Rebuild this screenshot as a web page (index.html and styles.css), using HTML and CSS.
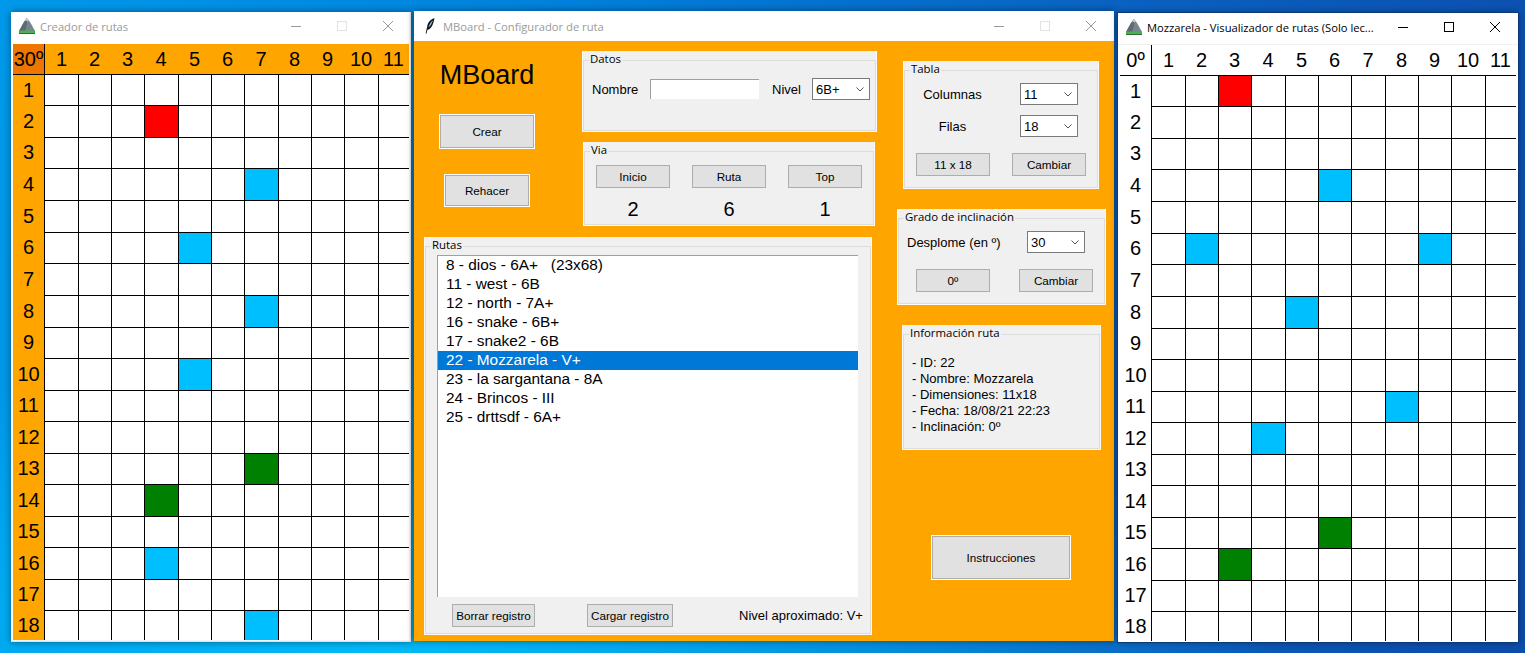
FILE: index.html
```html
<!DOCTYPE html>
<html lang="es">
<head>
    <meta charset="UTF-8">
    <meta name="viewport" content="width=device-width, initial-scale=1.0">
    <title>MBoard</title>
    <link rel="stylesheet" href="styles.css">
</head>
<body>
    <svg class="icon-defs" width="0" height="0">
        <symbol id="mountain" viewBox="0 0 16 16">
            <polygon points="8,0 11,4 16,13 16,16 0,16 0,13 5,4" fill="#77868d"/>
            <polygon points="8,0 5,4 0,13 0,14 6,14 8,6" fill="#5d6b73"/>
            <polygon points="8,0 9.6,2.2 8.4,3.6 7.4,2.6 6.4,3.4 6.6,2" fill="#c9d0d4"/>
            <rect x="0" y="12.5" width="16" height="2.5" fill="#4caf50"/>
            <rect x="0" y="15" width="16" height="1" fill="#2f6b3a"/>
        </symbol>
    </svg>

    <!-- creador -->
    <div class="window win-creator inactive">
        <div class="titlebar">
            <svg class="app-icon"><use href="#mountain"/></svg>
            <span class="title-text">Creador de rutas</span>
            <div class="controls">
                <span class="ctl"><i class="ctl-min"></i></span>
                <span class="ctl"><i class="ctl-max"></i></span>
                <span class="ctl"><svg class="ctl-close" viewBox="0 0 10 10"><path d="M0 0L10 10M10 0L0 10"/></svg></span>
            </div>
        </div>
        <div class="board orange" id="boardCreator"></div>
    </div>

    <!-- configurador -->
    <div class="window win-config inactive">
        <div class="titlebar">
            <svg class="feather" viewBox="0 0 10 16">
                <path d="M9.5 0.3C6 1 3 4 2.2 8.4L1.6 11.2L0.6 15.6L1.4 15.8L2.4 12C5.6 11.4 8 8 9.5 0.3Z" fill="#10161c"/>
                <path d="M8 2.2C6 3.6 4.4 6 3.4 9.4C5 8.4 6.8 6 8 2.2Z" fill="#8fb4d6"/>
            </svg>
            <span class="title-text">MBoard - Configurador de ruta</span>
            <div class="controls">
                <span class="ctl"><i class="ctl-min"></i></span>
                <span class="ctl"><i class="ctl-max"></i></span>
                <span class="ctl"><svg class="ctl-close" viewBox="0 0 10 10"><path d="M0 0L10 10M10 0L0 10"/></svg></span>
            </div>
        </div>
        <div class="config">
            <div class="col-main">
                <div class="top-row">
                    <div class="brand-col">
                        <h1 class="brand">MBoard</h1>
                        <button class="btn btn-big btn-crear">Crear</button>
                        <button class="btn btn-big btn-rehacer">Rehacer</button>
                    </div>
                    <div class="stack-col">
                        <div class="panel panel-datos">
                            <fieldset>
                                <legend>Datos</legend>
                                <div class="datos-row">
                                    <span class="lbl lbl-nombre">Nombre</span>
                                    <input class="entry" type="text">
                                    <span class="lbl lbl-nivel">Nivel</span>
                                    <div class="combo">6B+<svg viewBox="0 0 8 5"><path d="M0.5 0.5L4 4L7.5 0.5"/></svg></div>
                                </div>
                            </fieldset>
                        </div>
                        <div class="panel panel-via">
                            <fieldset>
                                <legend>Via</legend>
                                <div class="via-grid">
                                    <button class="btn">Inicio</button>
                                    <button class="btn">Ruta</button>
                                    <button class="btn">Top</button>
                                    <span class="count">2</span>
                                    <span class="count">6</span>
                                    <span class="count">1</span>
                                </div>
                            </fieldset>
                        </div>
                    </div>
                </div>
                <div class="panel panel-rutas">
                    <fieldset>
                        <legend>Rutas</legend>
                        <ul class="listbox">
                            <li>8 - dios - 6A+ &nbsp; (23x68)</li>
                            <li>11 - west - 6B</li>
                            <li>12 - north - 7A+</li>
                            <li>16 - snake - 6B+</li>
                            <li>17 - snake2 - 6B</li>
                            <li class="selected">22 - Mozzarela - V+</li>
                            <li>23 - la sargantana - 8A</li>
                            <li>24 - Brincos - III</li>
                            <li>25 - drttsdf - 6A+</li>
                        </ul>
                        <div class="rutas-foot">
                            <button class="btn btn-borrar">Borrar registro</button>
                            <button class="btn btn-cargar">Cargar registro</button>
                            <span class="lbl aprox">Nivel aproximado: V+</span>
                        </div>
                    </fieldset>
                </div>
            </div>
            <div class="col-side">
                <div class="panel panel-tabla">
                    <fieldset>
                        <legend>Tabla</legend>
                        <div class="tabla-grid">
                            <span class="lbl">Columnas</span>
                            <div class="combo">11<svg viewBox="0 0 8 5"><path d="M0.5 0.5L4 4L7.5 0.5"/></svg></div>
                            <span class="lbl">Filas</span>
                            <div class="combo">18<svg viewBox="0 0 8 5"><path d="M0.5 0.5L4 4L7.5 0.5"/></svg></div>
                        </div>
                        <div class="btn-row tabla-btns">
                            <button class="btn">11 x 18</button>
                            <button class="btn">Cambiar</button>
                        </div>
                    </fieldset>
                </div>
                <div class="panel panel-grado">
                    <fieldset>
                        <legend>Grado de inclinación</legend>
                        <div class="grado-row">
                            <span class="lbl">Desplome (en º)</span>
                            <div class="combo">30<svg viewBox="0 0 8 5"><path d="M0.5 0.5L4 4L7.5 0.5"/></svg></div>
                        </div>
                        <div class="btn-row grado-btns">
                            <button class="btn">0º</button>
                            <button class="btn">Cambiar</button>
                        </div>
                    </fieldset>
                </div>
                <div class="panel panel-info">
                    <fieldset>
                        <legend>Información ruta</legend>
                        <div class="info-text">
                            <div>- ID: 22</div>
                            <div>- Nombre: Mozzarela</div>
                            <div>- Dimensiones: 11x18</div>
                            <div>- Fecha: 18/08/21 22:23</div>
                            <div>- Inclinación: 0º</div>
                        </div>
                    </fieldset>
                </div>
                <button class="btn btn-big btn-instr">Instrucciones</button>
            </div>
        </div>
    </div>

    <!-- visualizador -->
    <div class="window win-viewer">
        <div class="titlebar">
            <svg class="app-icon"><use href="#mountain"/></svg>
            <span class="title-text">Mozzarela - Visualizador de rutas (Solo lec...</span>
            <div class="controls">
                <span class="ctl"><i class="ctl-min"></i></span>
                <span class="ctl"><i class="ctl-max"></i></span>
                <span class="ctl"><svg class="ctl-close" viewBox="0 0 10 10"><path d="M0 0L10 10M10 0L0 10"/></svg></span>
            </div>
        </div>
        <div class="board" id="boardViewer"></div>
    </div>

    <script src="script.js"></script>
</body>
</html>
```

FILE: styles.css
```css
* {
    box-sizing: border-box;
}
html, body {
    margin: 0;
    height: 100%;
}
body {
    position: relative;
    overflow: hidden;
    width: 1525px;
    height: 653px;
    font-family: "Liberation Sans", Arial, sans-serif;
    background:
        radial-gradient(ellipse 900px 300px at 25% 100%, #00baf8 0%, rgba(0, 186, 248, 0) 100%),
        linear-gradient(100deg, #0099ea 0%, #0080dc 35%, #0a60c0 70%, #0c4cab 100%);
}
.icon-defs {
    position: absolute;
}

/* ventanas */
.window {
    position: absolute;
    background: white;
    box-shadow: 0 0 7px rgba(0, 0, 0, 0.45);
}
.win-creator {
    left: 11px;
    top: 12px;
    width: 400px;
    height: 630px;
    padding: 0 2px;
    box-shadow: 0 0 7px rgba(0, 0, 0, 0.45), inset -1px -1px 2px #d8d8d8;
}
.win-config {
    left: 414px;
    top: 11px;
    width: 700px;
    height: 630px;
}
.win-viewer {
    left: 1118px;
    top: 13px;
    width: 400px;
    height: 629px;
    padding: 0 2px;
    outline: 1px solid #0d3a78;
}
.titlebar {
    display: flex;
    align-items: center;
    height: 32px;
    font-family: "Open Sans", sans-serif;
    font-size: 11.2px;
    color: black;
}
.win-creator .titlebar,
.win-viewer .titlebar {
    margin: 0 -2px;
    padding: 0 0 4px 8px;
}
.win-viewer .titlebar {
    padding-bottom: 3px;
    border-bottom: 1px solid #f0f0f0;
}
.win-config .titlebar {
    height: 30px;
    padding-left: 11px;
}
.inactive .title-text {
    color: #9a9a9a;
}
.app-icon {
    width: 16px;
    height: 16px;
    margin-right: 5px;
}
.feather {
    width: 10px;
    height: 16px;
    margin-right: 8px;
}
.controls {
    display: flex;
    margin-left: auto;
}
.ctl {
    display: flex;
    align-items: center;
    justify-content: center;
    width: 46px;
    height: 28px;
}
.ctl-min {
    width: 10px;
    height: 1px;
    background: black;
}
.ctl-max {
    width: 10px;
    height: 10px;
    border: 1px solid black;
}
.ctl-close {
    width: 10px;
    height: 10px;
}
.ctl-close path {
    stroke: black;
    stroke-width: 1;
    fill: none;
}
.inactive .ctl-min {
    background: #999;
}
.inactive .ctl-max {
    border-color: #e2e2e2;
}
.inactive .ctl-close path {
    stroke: #999;
}

/* tablero */
.board {
    display: grid;
    grid-template-columns: 31px 34px 33px 33px 34px 33px 33px 34px 33px 33px 34px 31px;
    grid-template-rows: 30px 31px 32px 31px 32px 32px 31px 32px 32px 31px 32px 31px 32px 31px 32px 31px 32px 31px 30px;
    font-size: 20px;
    color: black;
}
.board .label {
    display: flex;
    align-items: center;
    justify-content: center;
}
.board.orange .label {
    background: #ffa500;
}
.board.orange .corner {
    background: #ee7600;
}
.board .col-first {
    border-left: 1px solid black;
}
.board .row-first {
    border-top: 1px solid black;
}
.cell {
    border-left: 1px solid black;
    border-top: 1px solid black;
    background: white;
}
.cell.red {
    background: #ff0000;
}
.cell.blue {
    background: #00bfff;
}
.cell.green {
    background: #008000;
}

/* configurador */
.config {
    display: flex;
    height: 600px;
    background: #ffa500;
    font-size: 13px;
    color: black;
}
.col-main {
    width: 483px;
}
.col-side {
    display: flex;
    flex-direction: column;
    align-items: flex-start;
    width: 217px;
}
.top-row {
    display: flex;
    padding-top: 10px;
}
.brand-col {
    display: flex;
    flex-direction: column;
    align-items: center;
    width: 146px;
    margin-right: 22px;
    padding-top: 8px;
}
.brand {
    margin: 0;
    font-size: 27px;
    font-weight: normal;
    line-height: 32px;
}
.stack-col {
    width: 295px;
}

.btn {
    padding: 0;
    width: 74px;
    height: 23px;
    background: #e1e1e1;
    border: 1px solid #adadad;
    font-family: "Liberation Sans", Arial, sans-serif;
    font-size: 11.7px;
    color: black;
}
.btn-big {
    border: 1px solid white;
    box-shadow: inset 0 0 0 1px #adadad;
}
.btn-crear {
    width: 96px;
    height: 35px;
    margin-top: 23px;
}
.btn-rehacer {
    width: 86px;
    height: 33px;
    margin-top: 25px;
}
.btn-instr {
    width: 140px;
    height: 45px;
    margin: 85px 0 0 34px;
}

.panel {
    background: #f0f0f0;
    border: 1px solid #fafafa;
    border-top: none;
}
.panel fieldset {
    height: 100%;
    margin: 0;
    padding: 0;
    min-width: 0;
    border: 1px solid #dcdcdc;
}
.panel legend {
    margin-left: 5px;
    padding: 0 1px 2px;
    font-family: "Open Sans", sans-serif;
    font-size: 11.4px;
    line-height: 16px;
}
.lbl {
    white-space: nowrap;
}
.combo {
    display: flex;
    align-items: center;
    justify-content: space-between;
    width: 58px;
    height: 22px;
    padding: 0 5px 0 3px;
    background: white;
    border: 1px solid #7a7a7a;
}
.combo svg {
    width: 8px;
    height: 5px;
}
.combo path {
    stroke: #555;
    stroke-width: 1;
    fill: none;
}

.panel-datos {
    height: 81px;
}
.datos-row {
    display: flex;
    align-items: center;
    margin-top: 9px;
    padding-left: 8px;
}
.lbl-nombre {
    width: 58px;
}
.entry {
    width: 109px;
    height: 20px;
    padding: 0;
    background: white;
    border: none;
    border-top: 1px solid #a0a0a0;
    border-left: 1px solid #a0a0a0;
}
.lbl-nivel {
    width: 40px;
    margin-left: 13px;
}

.panel-via {
    width: 292px;
    height: 84px;
    margin: 10px 0 0 1px;
}
.via-grid {
    display: grid;
    grid-template-columns: repeat(3, 74px);
    column-gap: 22px;
    justify-items: center;
    margin-top: 5px;
    padding-left: 11px;
}
.count {
    margin-top: 9px;
    font-size: 20px;
    line-height: 24px;
}

.panel-rutas {
    width: 448px;
    height: 398px;
    margin: 11px 0 0 10px;
}
.listbox {
    width: 421px;
    height: 342px;
    margin: 0 0 0 11px;
    padding: 0;
    list-style: none;
    background: white;
    border-top: 1px solid #a0a0a0;
    border-left: 1px solid #a0a0a0;
    font-size: 15.4px;
}
.listbox li {
    height: 19px;
    padding-left: 8px;
    line-height: 18px;
    white-space: nowrap;
}
.listbox .selected {
    background: #0078d7;
    color: white;
}
.rutas-foot {
    display: flex;
    align-items: center;
    margin-top: 7px;
    padding-left: 26px;
}
.btn-borrar {
    width: 83px;
}
.btn-cargar {
    width: 86px;
    margin-left: 52px;
}
.aprox {
    margin-left: 66px;
}

.panel-tabla {
    width: 196px;
    height: 128px;
    margin: 20px 0 0 6px;
}
.tabla-grid {
    display: grid;
    grid-template-columns: 95px 58px;
    column-gap: 20px;
    row-gap: 10px;
    align-items: center;
    justify-items: center;
    margin-top: 4px;
}
.btn-row {
    display: flex;
    margin-top: 16px;
}
.tabla-btns {
    padding-left: 11px;
    gap: 22px;
}

.panel-grado {
    width: 209px;
    height: 96px;
    margin-top: 20px;
}
.grado-row {
    display: flex;
    align-items: center;
    margin-top: 4px;
    padding-left: 8px;
}
.grado-row .lbl {
    width: 120px;
}
.grado-btns {
    padding-left: 17px;
    gap: 29px;
}

.panel-info {
    width: 199px;
    height: 125px;
    margin: 20px 0 0 5px;
}
.info-text {
    margin-top: 12px;
    padding-left: 8px;
    line-height: 16px;
}
```

FILE: script.js
```js
// cada presa: [columna, fila, color]
const rutas = {
    boardCreator: {
        corner: "30º",
        presas: [
            [4, 2, "red"], [7, 4, "blue"], [5, 6, "blue"], [7, 8, "blue"], [5, 10, "blue"],
            [7, 13, "green"], [4, 14, "green"], [4, 16, "blue"], [7, 18, "blue"]
        ]
    },
    boardViewer: {
        corner: "0º",
        presas: [
            [3, 1, "red"], [6, 4, "blue"], [2, 6, "blue"], [9, 6, "blue"], [5, 8, "blue"],
            [8, 11, "blue"], [4, 12, "blue"], [6, 15, "green"], [3, 16, "green"]
        ]
    }
};

function crearCelda(clase, texto) {
    const celda = document.createElement("div");
    celda.className = clase;
    if (texto) celda.textContent = texto;
    return celda;
}

document.addEventListener("DOMContentLoaded", function() {
    Object.keys(rutas).forEach(id => {
        const board = document.getElementById(id);
        const ruta = rutas[id];

        board.appendChild(crearCelda("label corner", ruta.corner));
        for (let c = 1; c <= 11; c++) {
            board.appendChild(crearCelda(c === 1 ? "label col-first" : "label", String(c)));
        }
        for (let f = 1; f <= 18; f++) {
            board.appendChild(crearCelda(f === 1 ? "label row-first" : "label", String(f)));
            for (let c = 1; c <= 11; c++) {
                const presa = ruta.presas.find(p => p[0] === c && p[1] === f);
                board.appendChild(crearCelda(presa ? "cell " + presa[2] : "cell"));
            }
        }
    });
});
```
